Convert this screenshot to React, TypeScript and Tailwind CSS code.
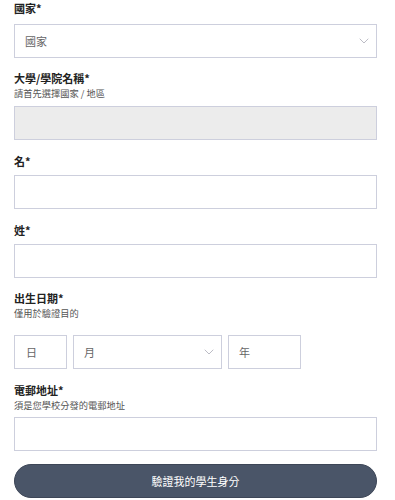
import { ChevronDown } from "lucide-react";

const font = { fontFamily: '"Noto Sans CJK TC", "Noto Sans", sans-serif' };

function Label({ text, hint, className = "" }: { text: string; hint?: string; className?: string }) {
  return (
    <div className={className}>
      <div className="text-[11px] leading-[17px] font-bold text-[#222]">{text}</div>
      {hint && <div className="text-[9.25px] leading-[13px] text-[#555]">{hint}</div>}
    </div>
  );
}

function Box({ className = "", children }: { className?: string; children?: React.ReactNode }) {
  return (
    <div
      className={`flex h-[34px] items-center border border-[#cdcfdd] bg-white text-[11px] text-[#666] ${className}`}
    >
      {children}
    </div>
  );
}

export default function App() {
  return (
    <div className="w-[395px] h-[500px] overflow-hidden bg-white pl-[14px] pr-[18px]" style={font}>
      <Label text="國家*" />
      <Box className="mt-[7px] justify-between pl-[10px] pr-[4px]">
        <span>國家</span>
        <ChevronDown className="h-4 w-4 text-[#9a9aa8]" strokeWidth={1} />
      </Box>

      <Label text="大學/學院名稱*" hint="請首先選擇國家 / 地區" className="mt-[12px]" />
      <Box className="mt-[6px] !bg-[#ececec]" />

      <Label text="名*" className="mt-[13px]" />
      <Box className="mt-[5px]" />

      <Label text="姓*" className="mt-[13px]" />
      <Box className="mt-[5px]" />

      <Label text="出生日期*" hint="僅用於驗證目的" className="mt-[12px]" />
      <div className="mt-[15px] flex gap-[6px]">
        <Box className="w-[53px] pl-[11px]">日</Box>
        <Box className="w-[149px] justify-between pl-[10px] pr-[4px]">
          <span>月</span>
          <ChevronDown className="h-4 w-4 text-[#9a9aa8]" strokeWidth={1} />
        </Box>
        <Box className="w-[73px] pl-[10px]">年</Box>
      </div>

      <Label text="電郵地址*" hint="須是您學校分發的電郵地址" className="mt-[13px]" />
      <Box className="mt-[5px]" />

      <button className="mt-[13px] flex h-[34px] w-full items-center justify-center rounded-full border border-[#3d4657] bg-[#4a5568] text-[11px] text-white">
        驗證我的學生身分
      </button>
    </div>
  );
}
